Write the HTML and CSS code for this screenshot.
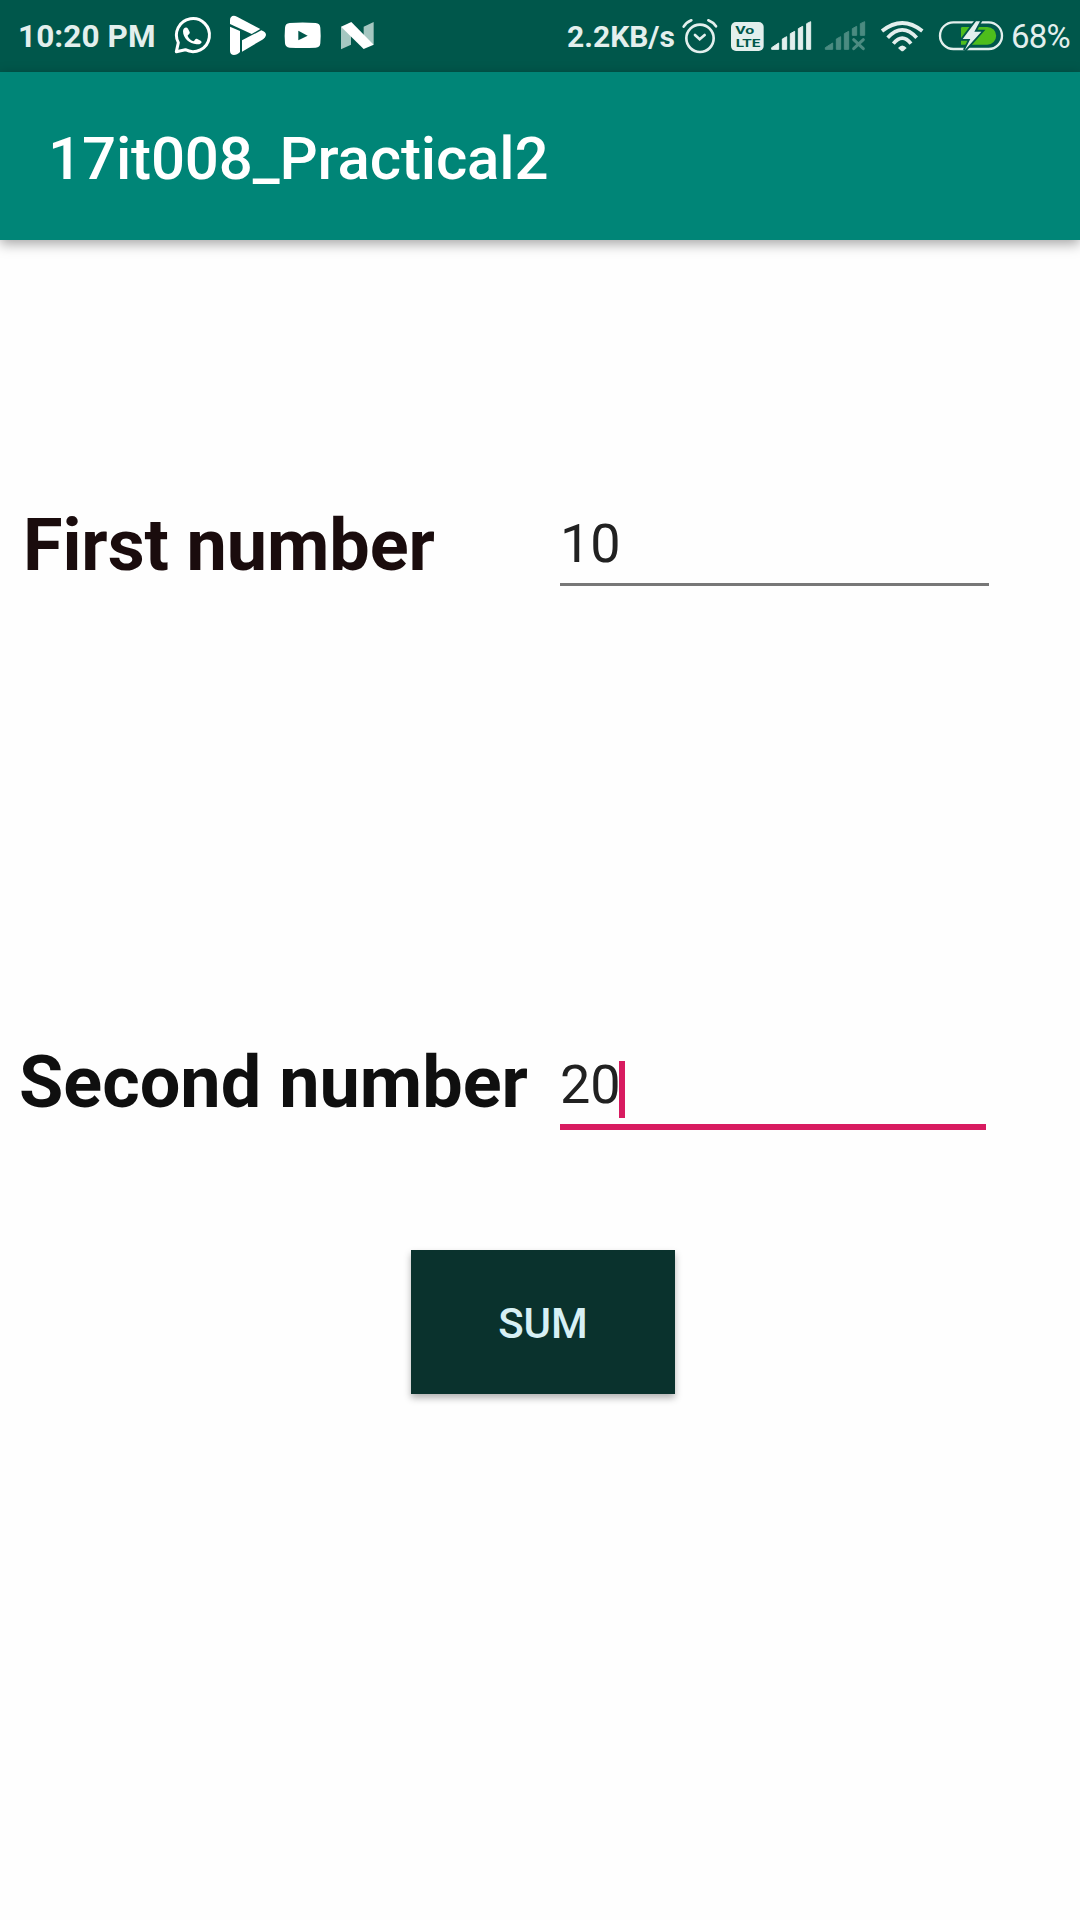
FILE: index.html
```html
<!DOCTYPE html>
<html lang="en">
<head>
<meta charset="utf-8">
<title>17it008_Practical2</title>
<link rel="stylesheet" href="styles.css">
</head>
<body>
<header class="status">
  <span class="time">10:20 PM</span>
  <div class="notifications">
    <svg width="42" height="72" viewBox="36 0 126 216">
      <path d="M55 128A49.500 49.500 0 1 1 76 149L49 155Z" fill="none" stroke="#fff" stroke-width="9" stroke-linejoin="round"/>
      <path d="M69 94C69 84 79 78 84 86L89 96C91 102 83 104 83 108C86 115 93 122 100 124C105 122 106 114 112 117L122 122C130 128 119 134 110 133C88 132 69 114 69 94Z" fill="#fff"/>
    </svg>
    <svg width="40" height="72" viewBox="204 0 120 216" fill="#fff">
      <path d="M210 72V61C210 49 219 44 231 50L301 87L275 102Z"/>
      <path d="M210 80L240 93V156C229 168 210 168 210 153Z"/>
      <path d="M246 121L304 91C323 98 321 110 307 119L246 155Z"/>
    </svg>
    <svg width="40" height="72" viewBox="366 0 120 216">
      <path d="M389 69Q428 66 467 69Q480 70 481 83Q483 106 481 130Q480 143 467 143Q428 145 389 143Q376 142 375 130Q373 106 375 83Q376 70 389 69Z" fill="#fff"/>
      <path d="M415 92L443 107L415 121Z" fill="#00574b"/>
    </svg>
    <svg width="40" height="72" viewBox="528 0 120 216">
      <path d="M543 80L573 96V134L543 148ZM611 80L641 66V134L611 118Z" fill="#a5c7c1"/>
      <path d="M543 80L574 66L641 134L611 147Z" fill="#fff"/>
    </svg>
  </div>
  <span class="rate">2.2KB/s</span>
  <svg class="alarm" width="38" height="72" viewBox="390 0 114 216" fill="none" stroke="#e3efed" stroke-width="8" stroke-linecap="round">
    <circle cx="450" cy="115" r="41"/>
    <path d="M401 80Q409 67 424 61M475 61Q490 67 498 79M435 105L449 118L464 105"/>
  </svg>
  <svg class="volte" width="38" height="72" viewBox="534 0 114 216">
    <rect x="543" y="66" width="98" height="87" rx="15" fill="#e3efed"/>
    <text x="556" y="102" textLength="57" lengthAdjust="spacingAndGlyphs">Vo</text>
    <text x="557" y="142" textLength="74" lengthAdjust="spacingAndGlyphs">LTE</text>
  </svg>
  <svg class="signal" width="46" height="72" viewBox="654 0 138 216" fill="#e3efed" stroke="#e3efed" stroke-width="3" stroke-linejoin="round">
    <path d="M665 148V143L686 129V148ZM697 148V117L710 110V148ZM721 148V101L734 94V148ZM745 148V86L758 79V148ZM770 148V71L782 65V148Z"/>
  </svg>
  <svg class="no-signal" width="46" height="72" viewBox="36 0 138 216" fill="#4b8b81" stroke="#4b8b81" stroke-width="3" stroke-linejoin="round">
    <path d="M46 148V143L68 129V148ZM79 148V117L92 110V148ZM103 148V101L116 94V148ZM127 106V86L140 79V106ZM151 106V71L164 65V106Z"/>
    <path d="M131 119L160 146M160 119L131 146" stroke-width="9" stroke-linecap="round"/>
  </svg>
  <svg class="wifi" width="48" height="72" viewBox="204 0 144 216" fill="none" stroke="#e3efed" stroke-width="11">
    <path d="M216 93Q277 45 337 93M233 113Q277 66 320 113M250 131Q277 98 303 131"/>
    <path d="M264 144Q277 129 290 144L281 152Q277 155 273 152Z" fill="#e3efed" stroke="none"/>
  </svg>
  <svg class="battery" width="70" height="72" viewBox="378 0 210 216">
    <rect x="390" y="67" width="186" height="80" rx="40" fill="none" stroke="#e3efed" stroke-width="7"/>
    <path d="M457 81H532A26.500 26.500 0 0 1 532 134H453V85Q453 81 457 81Z" fill="#4ebd1c"/>
    <path d="M498 64L458 117H481L464 151L514 95H493L510 64Z" fill="#e3efed" stroke="#00574b" stroke-width="11" paint-order="stroke"/>
  </svg>
  <span class="percent">68%</span>
</header>
<div class="appbar"><h1>17it008_Practical2</h1></div>
<main>
  <div class="row first">
    <label>First number</label>
    <div class="field">10</div>
  </div>
  <div class="row second">
    <label>Second number</label>
    <div class="field focused">20<i class="caret"></i></div>
  </div>
  <button class="sum">SUM</button>
</main>
</body>
</html>
```
FILE: styles.css
```css
* { box-sizing: border-box; }

body {
  margin: 0;
  width: 1080px;
  height: 1920px;
  overflow: hidden;
  background: #fefefe;
  font-family: Roboto, "Liberation Sans", sans-serif;
}

svg { display: block; flex: none; }

.status {
  display: flex;
  height: 72px;
  background: #00574b;
  color: #e3efed;
  line-height: 74px;
  white-space: nowrap;
}

.time {
  flex: none;
  width: 172px;
  padding-left: 18px;
  font-size: 31.5px;
  font-weight: 700;
  letter-spacing: .1px;
}

.notifications { display: flex; gap: 14px; width: 394px; flex: none; }

.rate {
  flex: none;
  width: 114px;
  padding-left: 1px;
  font-size: 30px;
  font-weight: 700;
  line-height: 74px;
}

.volte { margin: 0 2px 0 10px; }
.volte text {
  font: 700 35px Roboto, sans-serif;
  fill: #00574b;
}
.no-signal { margin: 0 10px 0 8px; }
.battery { margin: 0 5px 0 10px; }

.percent { font-size: 33px; line-height: 74px; letter-spacing: -.8px; }

.appbar {
  position: relative;
  height: 168px;
  padding-left: 48px;
  background: #008577;
  color: #fff;
  box-shadow: 0 4px 12px rgba(0, 0, 0, .35);
}

h1 {
  margin: 0;
  font-size: 60px;
  font-weight: 500;
  line-height: 173px;
  letter-spacing: -.15px;
}

main { display: flex; flex-direction: column; }

.row { display: flex; height: 96px; }
.first { margin-top: 256px; }
.second { margin-top: 441px; }

label {
  flex: none;
  width: 560px;
  font-size: 72px;
  font-weight: 700;
  line-height: 100px;
}

.first label { padding-left: 23px; color: #1a0c0d; letter-spacing: -.1px; }
.second label { padding-left: 19px; color: #0f0f0f; }

.field {
  width: 429px;
  height: 90px;
  border-bottom: 3px solid #777;
  color: #212121;
  font-size: 54px;
  line-height: 96px;
}

.focused {
  display: flex;
  width: 426px;
  height: 97px;
  border-bottom: 6px solid #d81b60;
  line-height: 104px;
}

.caret {
  width: 6px;
  height: 57px;
  margin: 28px 0 0 -2px;
  background: #d81b60;
}

.sum {
  width: 264px;
  height: 144px;
  margin: 121px 0 0 411px;
  padding: 2px 0 0;
  border: 0;
  background: #0a322d;
  box-shadow: 0 4px 7px rgba(0, 0, 0, .3);
  color: #d7f0f5;
  font: 500 42px Roboto, sans-serif;
}
```
